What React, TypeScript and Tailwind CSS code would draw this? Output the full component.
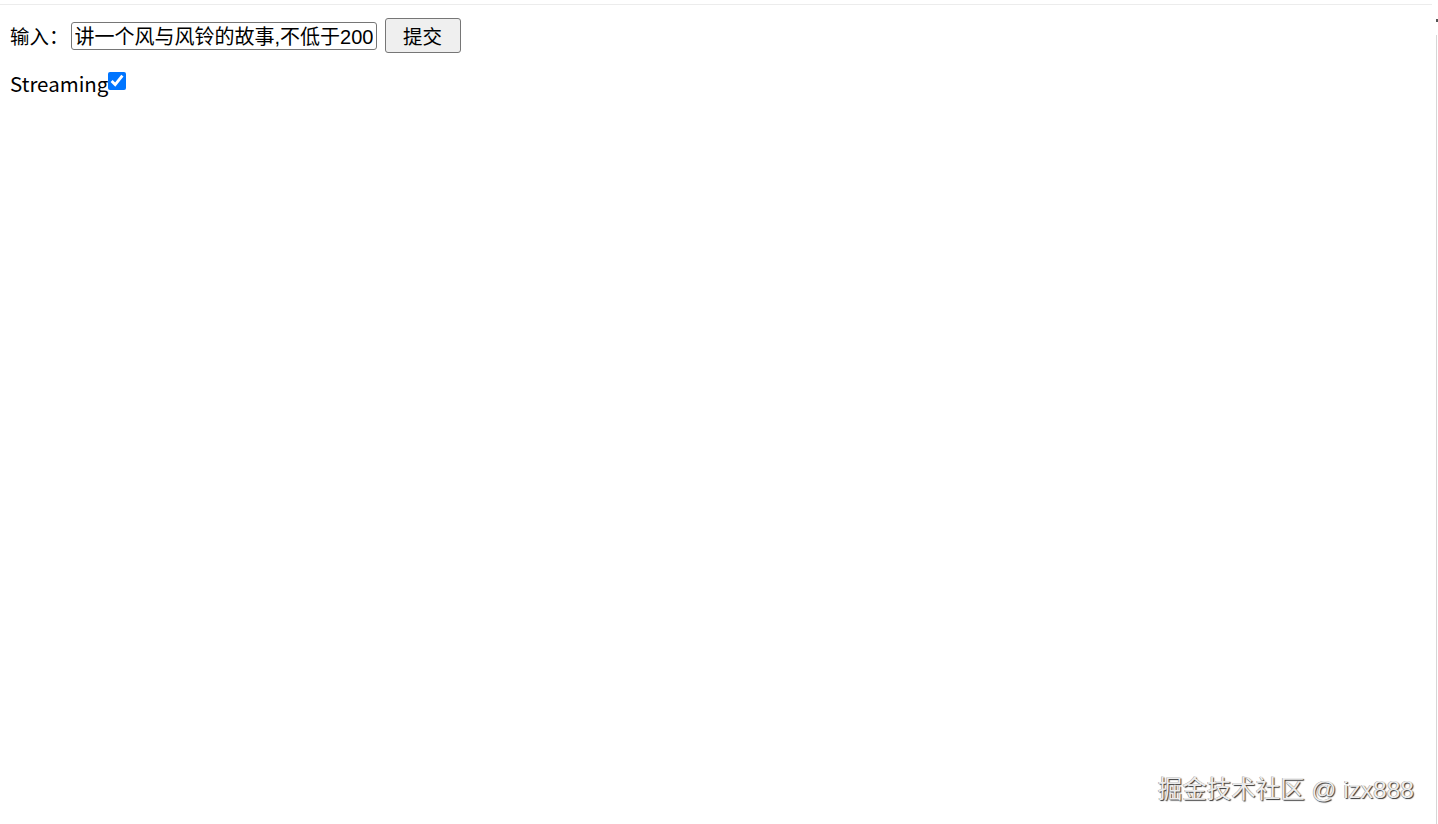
export default function App() {
  return (
    <div className="relative h-[824px] w-full overflow-hidden bg-white font-['Noto_Sans_CJK_SC','Noto_Sans',sans-serif] text-black">
      {/* thin top rule */}
      <div className="mt-[4px] h-px w-[1432px] bg-[#ececec]" />

      <div className="px-[10px] pt-[13px]">
        <div className="flex h-[35px] items-center">
          <label className="text-[19.5px] leading-none">输入：</label>
          <input
            defaultValue="讲一个风与风铃的故事,不低于200字"
            className="ml-[2px] h-[28px] w-[306px] rounded-[3px] border border-[#767676] px-[3px] font-['Liberation_Sans','Noto_Sans_CJK_SC',sans-serif] text-[20px] leading-none outline-none"
          />
          <button className="ml-[8px] h-[35px] w-[76px] rounded-[3px] border border-[#767676] bg-[#efefef] text-[19.5px] leading-none">
            提交
          </button>
        </div>

        <div className="mt-[20px] flex items-center">
          <span className="text-[20.5px] leading-none">Streaming</span>
          <input
            type="checkbox"
            defaultChecked
            className="-mt-[4px] h-[18px] w-[18px] accent-[#0075ff]"
          />
        </div>
      </div>

      {/* scrollbar edge */}
      <div className="absolute right-[1px] top-[35px] bottom-0 w-px bg-[#d6d6d6]" />
      <div className="absolute right-0 top-[19px] h-[3px] w-[2px] bg-[#555]" />

      {/* watermark */}
      <div className="absolute bottom-[22px] right-[24px] font-['Liberation_Sans','Noto_Sans_CJK_SC',sans-serif] text-[24.5px] leading-none text-[#ececec] [text-shadow:1px_1px_1px_#333,-0.5px_-0.5px_0_#999]">
        掘金技术社区 @ izx888
      </div>
    </div>
  );
}
